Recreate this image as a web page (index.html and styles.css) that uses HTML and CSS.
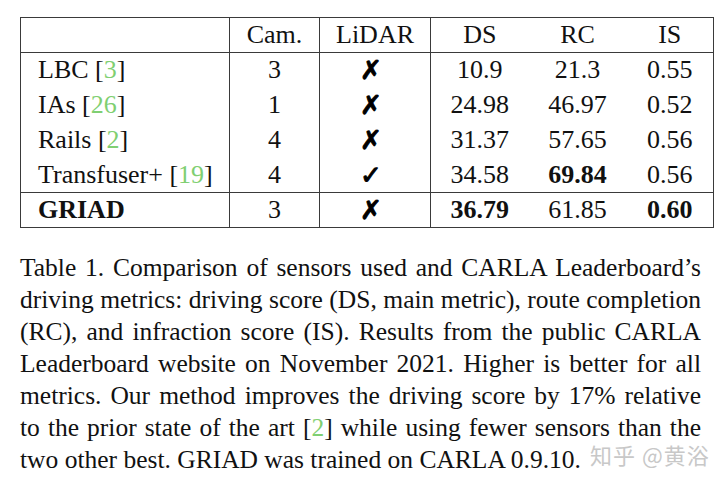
FILE: index.html
```html
<!DOCTYPE html>
<html>
<head>
<meta charset="utf-8">
<link rel="stylesheet" href="styles.css">
</head>
<body>
<div class="page">
  <table class="results">
    <thead>
      <tr>
        <th class="name"></th>
        <th class="cam">Cam.</th>
        <th class="lidar">LiDAR</th>
        <th class="ds">DS</th>
        <th class="rc">RC</th>
        <th class="is">IS</th>
      </tr>
    </thead>
    <tbody>
      <tr>
        <td class="name">LBC [<span class="cite">3</span>]</td>
        <td>3</td>
        <td class="mark">✗</td>
        <td>10.9</td>
        <td>21.3</td>
        <td>0.55</td>
      </tr>
      <tr>
        <td class="name">IAs [<span class="cite">26</span>]</td>
        <td>1</td>
        <td class="mark">✗</td>
        <td>24.98</td>
        <td>46.97</td>
        <td>0.52</td>
      </tr>
      <tr>
        <td class="name">Rails [<span class="cite">2</span>]</td>
        <td>4</td>
        <td class="mark">✗</td>
        <td>31.37</td>
        <td>57.65</td>
        <td>0.56</td>
      </tr>
      <tr>
        <td class="name">Transfuser+ [<span class="cite">19</span>]</td>
        <td>4</td>
        <td class="mark">✓</td>
        <td>34.58</td>
        <td><b>69.84</b></td>
        <td>0.56</td>
      </tr>
    </tbody>
    <tbody class="ours">
      <tr>
        <td class="name"><b>GRIAD</b></td>
        <td>3</td>
        <td class="mark">✗</td>
        <td><b>36.79</b></td>
        <td>61.85</td>
        <td><b>0.60</b></td>
      </tr>
    </tbody>
  </table>
  <p class="caption">Table 1. Comparison of sensors used and CARLA Leaderboard’s driving metrics: driving score (DS, main metric), route completion (RC), and infraction score (IS). Results from the public CARLA Leaderboard website on November 2021. Higher is better for all metrics. Our method improves the driving score by 17% relative to the prior state of the art [<span class="cite">2</span>] while using fewer sensors than the two other best. GRIAD was trained on CARLA 0.9.10.</p>
  <div class="watermark">知乎 @黄浴</div>
</div>
</body>
</html>
```
FILE: styles.css
```css
html, body {
  margin: 0;
  padding: 0;
  background: #ffffff;
}
.page {
  position: relative;
  width: 720px;
  height: 485px;
  padding: 17px 0 0 20px;
  box-sizing: border-box;
  font-family: "Liberation Serif", "Times New Roman", serif;
  color: #111;
}
.results {
  border-collapse: collapse;
  border: 1.5px solid #3a3a3a;
  font-size: 26px;
  line-height: 1;
}
.results th,
.results td {
  height: 35px;
  padding: 0;
  text-align: center;
  font-weight: normal;
  box-sizing: border-box;
}
.results thead tr {
  border-bottom: 1.5px solid #3a3a3a;
}
.ours {
  border-top: 1.5px solid #3a3a3a;
}
.results .name {
  width: 209px;
  text-align: left;
  padding-left: 17px;
  border-right: 1.5px solid #3a3a3a;
}
.results tr > :nth-child(2) {
  width: 90px;
  border-right: 1.5px solid #3a3a3a;
}
.results tr > :nth-child(3) {
  width: 111px;
  border-right: 1.5px solid #3a3a3a;
}
.results tr > :nth-child(4) { width: 98px; }
.results tr > :nth-child(5) { width: 98px; }
.results tr > :nth-child(6) { width: 87px; }
.results .mark {
  font-family: "DejaVu Sans", sans-serif;
  font-size: 26px;
  line-height: 1;
  padding-right: 8px;
  color: #000;
  -webkit-text-stroke: 1px #000;
}
.cite {
  color: #7fcf72;
}
.caption {
  margin: 24px 0 0 0;
  width: 681px;
  font-size: 25.5px;
  line-height: 32px;
  text-align: justify;
  text-align-last: left;
  color: #111;
}
.watermark {
  position: absolute;
  left: 590px;
  top: 438px;
  font-family: "Noto Sans CJK SC", sans-serif;
  font-size: 22px;
  color: #c8c8c8;
  letter-spacing: 1px;
}
```
